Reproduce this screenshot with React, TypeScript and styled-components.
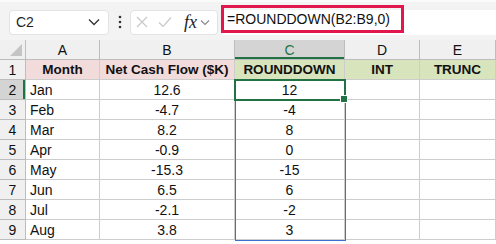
import { Fragment } from 'react'
import styled, { createGlobalStyle } from 'styled-components'

const Global = createGlobalStyle`
  body {
    margin: 0;
    background: #ffffff;
    font-family: "Liberation Sans", Arial, sans-serif;
  }
`

const Page = styled.div`
  width: 496px;
  height: 244px;
  overflow: hidden;
  display: flex;
  flex-direction: column;
`

const Toolbar = styled.div`
  height: 40px;
  display: flex;
  align-items: center;
  background: #f3f3f3;
  border-top: 2px solid #fafafa;
  box-sizing: border-box;
  padding: 2px 0 0 9px;
`

const NameBox = styled.div`
  width: 100px;
  height: 25px;
  box-sizing: border-box;
  background: #fff;
  border: 1px solid #e3e3e3;
  border-radius: 4px;
  display: flex;
  align-items: center;
  justify-content: space-between;
  padding: 0 8px 0 6px;
  font-size: 14px;
  color: #1f1f1f;
`

const Dots = styled.div`
  width: 21px;
  display: flex;
  justify-content: center;
`

const FnBox = styled.div`
  width: 88px;
  height: 25px;
  box-sizing: border-box;
  background: #fff;
  border: 1px solid #e3e3e3;
  border-radius: 4px;
  display: flex;
  align-items: center;
  padding: 0 5px;
`

const Fx = styled.span`
  font-family: "Liberation Serif", "Times New Roman", serif;
  font-style: italic;
  font-size: 18px;
  color: #222;
  margin: 0 3px 0 10px;
`

const Formula = styled.div`
  flex: 1;
  height: 25px;
  margin-left: 4px;
  background: #fff;
  display: flex;
  align-items: center;
`

const FormulaText = styled.div`
  font-size: 14px;
  color: #111;
  padding: 0 11px 0 3px;
  height: 28px;
  margin-top: -6px;
  display: flex;
  align-items: center;
  border: 3px solid #e2174d;
  box-sizing: border-box;
  margin-left: -1px;
`

const Sheet = styled.div`
  position: relative;
  display: grid;
  grid-template-columns: 26px 74px 135px 110px 75px 76px;
  grid-auto-rows: 20px;
`

const Cell = styled.div<{ $kind?: 'corner' | 'col' | 'row' | 'data'; $active?: boolean; $fill?: string; $bold?: boolean; $left?: boolean }>`
  box-sizing: border-box;
  border-right: 1px solid ${p => (p.$kind === 'data' ? '#cdcdcd' : '#bdbdbd')};
  border-bottom: 1px solid ${p => (p.$kind === 'data' ? '#cdcdcd' : '#bdbdbd')};
  background: ${p =>
    p.$fill ? p.$fill : p.$active ? '#d4d4d4' : p.$kind === 'data' ? '#fff' : '#f0f0f0'};
  color: ${p => (p.$active && p.$kind === 'col' ? '#217346' : '#111')};
  font-size: ${p => (p.$bold ? '13.5px' : '14px')};
  font-weight: ${p => (p.$bold ? 700 : 400)};
  display: flex;
  align-items: center;
  justify-content: ${p => (p.$left ? 'flex-start' : 'center')};
  padding-left: ${p => (p.$left ? '4px' : '0')};
  white-space: nowrap;
  position: relative;
  ${p => p.$active && p.$kind === 'col' && 'box-shadow: inset 0 -2px 0 #217346;'}
  ${p => p.$active && p.$kind === 'row' && 'box-shadow: inset -2px 0 0 #217346;'}
`

const Corner = styled.div`
  position: absolute;
  right: 3px;
  bottom: 3px;
  width: 0;
  height: 0;
  border-left: 12px solid transparent;
  border-bottom: 12px solid #c4c4c4;
`

const Range = styled.div`
  position: absolute;
  left: 235px;
  top: 40px;
  width: 111px;
  height: 161px;
  box-sizing: border-box;
  border: 1px solid #3c6fd0;
  pointer-events: none;
`

const Selected = styled.div`
  position: absolute;
  left: 234px;
  top: 39px;
  width: 112px;
  height: 22px;
  box-sizing: border-box;
  border: 2px solid #217346;
  pointer-events: none;
`

const Handle = styled.div`
  position: absolute;
  right: -4px;
  bottom: -4px;
  width: 6px;
  height: 6px;
  background: #217346;
  border: 1px solid #fff;
`

const rows: [string, string, string][] = [
  ['Jan', '12.6', '12'],
  ['Feb', '-4.7', '-4'],
  ['Mar', '8.2', '8'],
  ['Apr', '-0.9', '0'],
  ['May', '-15.3', '-15'],
  ['Jun', '6.5', '6'],
  ['Jul', '-2.1', '-2'],
  ['Aug', '3.8', '3'],
]

const PINK = '#f2dcdb'
const GREEN = '#d8e4bc'

export default function App() {
  return (
    <Page>
      <Global />
      <Toolbar>
        <NameBox>
          <span>C2</span>
          <svg width="12" height="8" viewBox="0 0 12 8">
            <path d="M1 1.5 L6 6.5 L11 1.5" fill="none" stroke="#333" strokeWidth="1.3" />
          </svg>
        </NameBox>
        <Dots>
          <svg width="4" height="14" viewBox="0 0 4 14">
            <circle cx="2" cy="2" r="1.3" fill="#333" />
            <circle cx="2" cy="7" r="1.3" fill="#333" />
            <circle cx="2" cy="12" r="1.3" fill="#333" />
          </svg>
        </Dots>
        <FnBox>
          <svg width="12" height="12" viewBox="0 0 12 12">
            <path d="M1 1 L11 11 M11 1 L1 11" stroke="#c8c8c8" strokeWidth="1.2" />
          </svg>
          <svg width="16" height="12" viewBox="0 0 16 12" style={{ marginLeft: 10 }}>
            <path d="M1 6.5 L5 10.5 L13 1.5" fill="none" stroke="#c8c8c8" strokeWidth="1.2" />
          </svg>
          <Fx>fx</Fx>
          <svg width="10" height="7" viewBox="0 0 10 7">
            <path d="M1 1.5 L5 5.5 L9 1.5" fill="none" stroke="#888" strokeWidth="1.1" />
          </svg>
        </FnBox>
        <Formula>
          <FormulaText>=ROUNDDOWN(B2:B9,0)</FormulaText>
        </Formula>
      </Toolbar>
      <Sheet>
        <Cell $kind="corner"><Corner /></Cell>
        <Cell $kind="col">A</Cell>
        <Cell $kind="col">B</Cell>
        <Cell $kind="col" $active>C</Cell>
        <Cell $kind="col">D</Cell>
        <Cell $kind="col">E</Cell>

        <Cell $kind="row">1</Cell>
        <Cell $kind="data" $fill={PINK} $bold>Month</Cell>
        <Cell $kind="data" $fill={PINK} $bold>Net Cash Flow ($K)</Cell>
        <Cell $kind="data" $fill={GREEN} $bold>ROUNDDOWN</Cell>
        <Cell $kind="data" $fill={GREEN} $bold>INT</Cell>
        <Cell $kind="data" $fill={GREEN} $bold>TRUNC</Cell>

        {rows.map(([m, v, r], i) => (
          <Fragment key={m}>
            <Cell $kind="row" $active={i === 0}>{i + 2}</Cell>
            <Cell $kind="data" $left>{m}</Cell>
            <Cell $kind="data">{v}</Cell>
            <Cell $kind="data">{r}</Cell>
            <Cell $kind="data" />
            <Cell $kind="data" />
          </Fragment>
        ))}
        <Range />
        <Selected>
          <Handle />
        </Selected>
      </Sheet>
    </Page>
  )
}
